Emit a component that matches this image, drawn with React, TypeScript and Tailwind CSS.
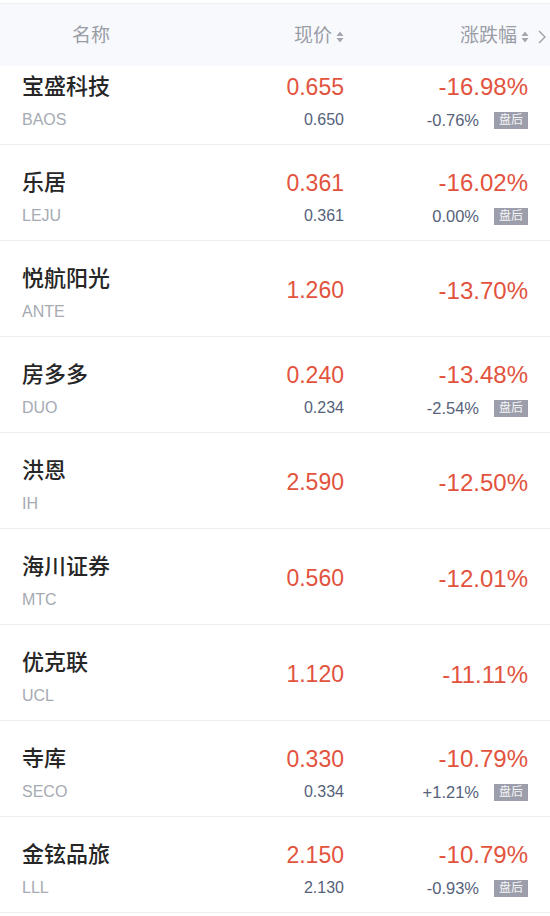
type Stock = {
  name: string;
  code: string;
  price: string;
  change: string;
  after?: { price: string; change: string };
};

const stocks: Stock[] = [
  { name: "宝盛科技", code: "BAOS", price: "0.655", change: "-16.98%", after: { price: "0.650", change: "-0.76%" } },
  { name: "乐居", code: "LEJU", price: "0.361", change: "-16.02%", after: { price: "0.361", change: "0.00%" } },
  { name: "悦航阳光", code: "ANTE", price: "1.260", change: "-13.70%" },
  { name: "房多多", code: "DUO", price: "0.240", change: "-13.48%", after: { price: "0.234", change: "-2.54%" } },
  { name: "洪恩", code: "IH", price: "2.590", change: "-12.50%" },
  { name: "海川证券", code: "MTC", price: "0.560", change: "-12.01%" },
  { name: "优克联", code: "UCL", price: "1.120", change: "-11.11%" },
  { name: "寺库", code: "SECO", price: "0.330", change: "-10.79%", after: { price: "0.334", change: "+1.21%" } },
  { name: "金铉品旅", code: "LLL", price: "2.150", change: "-10.79%", after: { price: "2.130", change: "-0.93%" } },
];

function SortIcon() {
  return (
    <svg width="8" height="12" viewBox="0 0 8 12" className="ml-[4px]">
      <path d="M4 0.5 L7.5 5 L0.5 5 Z" fill="#a3a6ae" />
      <path d="M4 11.5 L7.5 7 L0.5 7 Z" fill="#a3a6ae" />
    </svg>
  );
}

function Row({ s }: { s: Stock }) {
  return (
    <div className="flex h-[96px] border-b border-[#ededf0] bg-white pl-[22px] pr-[22px]">
      <div className="flex-1 pt-[23px]">
        <div className="h-[30px] text-[22px] leading-[30px] font-medium text-[#262626]">{s.name}</div>
        <div className="mt-[7px] text-[16px] leading-[22px] text-[#a6aab2]">{s.code}</div>
      </div>
      {s.after ? (
        <>
          <div className="w-[120px] pt-[23px] text-right">
            <div className="h-[30px] text-[23px] leading-[30px] text-[#e2533e]">{s.price}</div>
            <div className="mt-[7px] text-[16px] leading-[22px] text-[#56627a]">{s.after.price}</div>
          </div>
          <div className="w-[184px] pt-[23px] text-right">
            <div className="h-[30px] text-[24px] leading-[30px] text-[#e2533e]">{s.change}</div>
            <div className="mt-[7px] flex h-[22px] items-center justify-end">
              <span className="text-[16.5px] leading-[22px] text-[#56627a]">{s.after.change}</span>
              <span className="ml-[15px] flex h-[17px] w-[34px] items-center justify-center bg-[#9c9eab] text-[12px] leading-none text-[#f4f4f7]">
                盘后
              </span>
            </div>
          </div>
        </>
      ) : (
        <>
          <div className="flex w-[120px] items-center justify-end pt-[4px] text-[23px] text-[#e2533e]">{s.price}</div>
          <div className="flex w-[184px] items-center justify-end pt-[4px] text-[24px] text-[#e2533e]">{s.change}</div>
        </>
      )}
    </div>
  );
}

export default function App() {
  return (
    <div
      className="h-[916px] w-[550px] overflow-hidden bg-white"
      style={{ fontFamily: '"Liberation Sans", "Noto Sans CJK SC", sans-serif' }}
    >
      <div className="h-[4px] border-b border-[#eeeff2] bg-white" />
      <div className="relative z-10 flex h-[62px] items-center bg-[#f8f9fd] pt-[3px] text-[19px] text-[#9a9da5]">
        <div className="flex-1 pl-[72px]">名称</div>
        <div className="flex w-[120px] items-center justify-end">
          <span>现价</span>
          <SortIcon />
        </div>
        <div className="flex w-[206px] items-center justify-end pr-[4px]">
          <span>涨跌幅</span>
          <SortIcon />
          <svg width="8" height="14" viewBox="0 0 8 14" className="ml-[9px]">
            <path d="M1 1 L7 7 L1 13" fill="none" stroke="#9a9da5" strokeWidth="1.3" />
          </svg>
        </div>
      </div>
      <div className="-mt-[17px]">
        {stocks.map((s) => (
          <Row key={s.code} s={s} />
        ))}
      </div>
    </div>
  );
}
